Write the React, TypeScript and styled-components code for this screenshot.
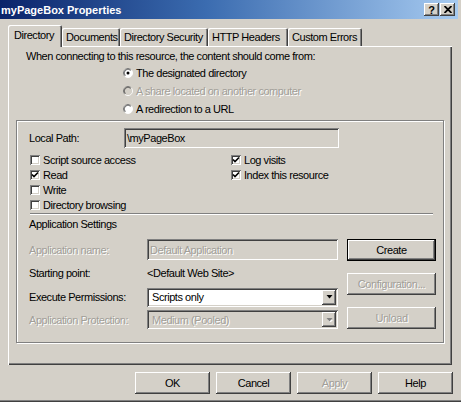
import React from 'react';
import styled, { createGlobalStyle, css } from 'styled-components';

const BG = '#d4d0c8';

const GlobalStyle = createGlobalStyle`
  html, body { margin: 0; padding: 0; background: ${BG}; }
  body {
    font-family: "Liberation Sans", Arial, sans-serif;
    font-size: 11px;
    letter-spacing: -0.45px;
    color: #000;
  }
  * { box-sizing: border-box; }
`;

const disabledText = css`
  color: #a19e98;
  text-shadow: 1px 1px 0 #fff;
`;

const raised = css`
  box-shadow: inset -1px -1px #404040, inset 1px 1px #fff, inset -2px -2px #808080;
`;

const sunken = css`
  box-shadow: inset 1px 1px #808080, inset -1px -1px #fff, inset 2px 2px #404040, inset -2px -2px ${BG};
`;

const Window = styled.div`
  width: 461px;
  height: 402px;
  background: ${BG};
  display: flex;
  flex-direction: column;
  box-shadow: inset 0 -1px #404040, inset 0 -2px #808080;
`;

const TitleBar = styled.div`
  height: 19px;
  margin-right: 3px;
  padding: 0 3px 0 1px;
  display: flex;
  align-items: center;
  justify-content: space-between;
  background: linear-gradient(90deg, #0a246a 0%, #3b6cb0 45%, #a6caf0 100%);
`;

const TitleText = styled.span`
  color: #fff;
  font-weight: bold;
  font-size: 11px;
  letter-spacing: 0;
`;

const CaptionButtons = styled.div`
  display: flex;
  gap: 1px;
`;

const CaptionButton = styled.div`
  width: 15px;
  height: 13px;
  background: ${BG};
  ${raised};
  display: flex;
  align-items: center;
  justify-content: center;
  font-weight: bold;
  font-size: 11px;
  letter-spacing: 0;
`;

const TabStrip = styled.div`
  display: flex;
  align-items: flex-end;
  height: 21px;
  margin-top: 6px;
  padding-left: 8px;
  position: relative;
  z-index: 1;
`;

const Tab = styled.div<{ $w: number; $active?: boolean }>`
  width: ${(p) => p.$w}px;
  height: ${(p) => (p.$active ? 22 : 18)}px;
  margin-bottom: ${(p) => (p.$active ? -1 : 0)}px;
  padding: ${(p) => (p.$active ? '0 0 3px 6px' : '0 0 0 4px')};
  display: flex;
  align-items: center;
  background: ${BG};
  border-radius: 2px 2px 0 0;
  box-shadow: inset 1px 1px #fff, inset -1px 0 #404040, inset -2px 0 #808080;
  white-space: nowrap;
`;

const Panel = styled.div`
  margin: 0 9px 0 8px;
  height: 319px;
  padding: 4px 0 0 1px;
  display: flex;
  flex-direction: column;
  box-shadow: inset 1px 1px #fff, inset -1px -1px #404040, inset -2px -2px #808080;
`;

const Intro = styled.div`
  margin-left: 17px;
  line-height: 13px;
  white-space: nowrap;
`;

const RadioGroup = styled.div`
  margin: 1px 0 0 114px;
  display: flex;
  flex-direction: column;
`;

const OptionRow = styled.label<{ $disabled?: boolean; $h?: number }>`
  height: ${(p) => p.$h ?? 18}px;
  display: flex;
  align-items: center;
  gap: 3px;
  white-space: nowrap;
  ${(p) => p.$disabled && disabledText};
`;

const GroupBox = styled.div`
  margin: 2px 0 0 7px;
  width: 428px;
  height: 223px;
  padding: 7px 0 0 12px;
  border: 1px solid #808080;
  box-shadow: inset 1px 1px #fff, 1px 1px #fff;
  display: flex;
  flex-direction: column;
`;

const LocalPathRow = styled.div`
  display: flex;
  align-items: center;
  height: 20px;
`;

const FieldLabel = styled.div<{ $w?: number; $disabled?: boolean }>`
  ${(p) => p.$w && `width: ${p.$w}px;`}
  white-space: nowrap;
  ${(p) => p.$disabled && disabledText};
`;

const TextField = styled.div<{ $w: number; $h?: number; $disabled?: boolean }>`
  width: ${(p) => p.$w}px;
  height: ${(p) => p.$h ?? 20}px;
  padding: 0 0 0 3px;
  display: flex;
  align-items: center;
  background: ${BG};
  ${sunken};
  white-space: nowrap;
  ${(p) => p.$disabled && disabledText};
`;

const CheckGrid = styled.div`
  margin: 4px 0 0 1px;
  display: grid;
  grid-template-columns: 201px auto;
  grid-auto-rows: 15px;
`;

const CheckBox = styled.span`
  width: 10px;
  height: 10px;
  flex: none;
  background: #fff;
  ${sunken};
  display: flex;
  align-items: center;
  justify-content: center;
`;

const Separator = styled.div`
  margin: 1px 10px 0 1px;
  height: 2px;
  border-top: 1px solid #808080;
  border-bottom: 1px solid #fff;
`;

const Heading = styled.div`
  margin-top: 3px;
  line-height: 13px;
`;

const SettingsArea = styled.div`
  margin-top: 8px;
  display: flex;
`;

const SettingsGrid = styled.div`
  display: grid;
  grid-template-columns: 118px 191px;
  grid-template-rows: 21px 26px 22px 23px;
  align-items: center;
`;

const SideButtons = styled.div`
  margin-left: 9px;
  display: flex;
  flex-direction: column;
  gap: 12px;
`;

const Button = styled.div<{ $w: number; $default?: boolean; $disabled?: boolean }>`
  width: ${(p) => p.$w}px;
  height: 22px;
  display: flex;
  align-items: center;
  justify-content: center;
  background: ${BG};
  white-space: nowrap;
  ${(p) =>
    p.$default
      ? css`
          box-shadow: inset 0 0 0 1px #000, inset -2px -2px #404040, inset 2px 2px #fff, inset -3px -3px #808080;
        `
      : raised};
  ${(p) => p.$disabled && disabledText};
`;

const Combo = styled.div<{ $disabled?: boolean }>`
  width: 191px;
  height: 19px;
  padding: 2px 2px 2px 5px;
  display: flex;
  align-items: center;
  background: ${(p) => (p.$disabled ? BG : '#fff')};
  ${sunken};
  ${(p) => p.$disabled && disabledText};
`;

const ComboText = styled.span`
  flex: 1;
  white-space: nowrap;
`;

const ComboArrow = styled.span`
  width: 14px;
  height: 15px;
  background: ${BG};
  ${raised};
  display: flex;
  align-items: center;
  justify-content: center;
`;

const Footer = styled.div`
  margin-top: 7px;
  padding-right: 8px;
  display: flex;
  justify-content: flex-end;
  gap: 6px;
`;

const Radio: React.FC<{ checked?: boolean; disabled?: boolean }> = ({ checked, disabled }) => (
  <svg width="10" height="10" viewBox="0 0 12 12" style={{ flex: 'none' }}>
    <circle cx="6" cy="6" r="5.5" fill={disabled ? BG : '#fff'} />
    <path d="M9.9 2.1 A5.5 5.5 0 0 0 2.1 9.9" fill="none" stroke="#808080" strokeWidth="1" />
    <path d="M9.2 2.8 A4.5 4.5 0 0 0 2.8 9.2" fill="none" stroke="#404040" strokeWidth="1" />
    <path d="M9.9 2.1 A5.5 5.5 0 0 1 2.1 9.9" fill="none" stroke="#fff" strokeWidth="1" />
    {checked && <circle cx="6" cy="6" r="1.8" fill="#000" />}
  </svg>
);

const Check: React.FC<{ checked?: boolean }> = ({ checked }) => (
  <CheckBox>
    {checked && (
      <svg width="8" height="8" viewBox="0 0 8 8">
        <path d="M1 3.5 L3 5.5 L7 1.5" fill="none" stroke="#000" strokeWidth="1.6" />
      </svg>
    )}
  </CheckBox>
);

const Arrow: React.FC<{ disabled?: boolean }> = ({ disabled }) => (
  <svg width="7" height="4" viewBox="0 0 7 4">
    {disabled && <path d="M1 1 H6 L3.5 3.5 Z" fill="#fff" transform="translate(1,1)" />}
    <path d="M0.5 0 H6.5 L3.5 3.5 Z" fill={disabled ? '#808080' : '#000'} />
  </svg>
);

const CheckItem: React.FC<{ label: string; checked?: boolean }> = ({ label, checked }) => (
  <OptionRow $h={15}>
    <Check checked={checked} />
    {label}
  </OptionRow>
);

const tabs = [
  { label: 'Directory', w: 54, active: true },
  { label: 'Documents', w: 58 },
  { label: 'Directory Security', w: 88 },
  { label: 'HTTP Headers', w: 80 },
  { label: 'Custom Errors', w: 74 },
];

export default function App() {
  return (
    <>
      <GlobalStyle />
      <Window>
        <TitleBar>
          <TitleText>myPageBox Properties</TitleText>
          <CaptionButtons>
            <CaptionButton>?</CaptionButton>
            <CaptionButton>
              <svg width="8" height="7" viewBox="0 0 8 7">
                <path d="M0.5 0 L7.5 7 M7.5 0 L0.5 7" stroke="#000" strokeWidth="1.8" />
              </svg>
            </CaptionButton>
          </CaptionButtons>
        </TitleBar>

        <TabStrip>
          {tabs.map((t) => (
            <Tab key={t.label} $w={t.w} $active={t.active}>
              {t.label}
            </Tab>
          ))}
        </TabStrip>

        <Panel>
          <Intro>When connecting to this resource, the content should come from:</Intro>
          <RadioGroup>
            <OptionRow>
              <Radio checked />
              The designated directory
            </OptionRow>
            <OptionRow $disabled>
              <Radio disabled />
              A share located on another computer
            </OptionRow>
            <OptionRow>
              <Radio />
              A redirection to a URL
            </OptionRow>
          </RadioGroup>

          <GroupBox>
            <LocalPathRow>
              <FieldLabel $w={95}>Local Path:</FieldLabel>
              <TextField $w={215}>\myPageBox</TextField>
            </LocalPathRow>

            <CheckGrid>
              <CheckItem label="Script source access" />
              <CheckItem label="Log visits" checked />
              <CheckItem label="Read" checked />
              <CheckItem label="Index this resource" checked />
              <CheckItem label="Write" />
              <span />
              <CheckItem label="Directory browsing" />
            </CheckGrid>

            <Separator />
            <Heading>Application Settings</Heading>

            <SettingsArea>
              <SettingsGrid>
                <FieldLabel $disabled>Application name:</FieldLabel>
                <TextField $w={191} $h={21} $disabled>
                  Default Application
                </TextField>

                <FieldLabel>Starting point:</FieldLabel>
                <FieldLabel>&lt;Default Web Site&gt;</FieldLabel>

                <FieldLabel>Execute Permissions:</FieldLabel>
                <Combo>
                  <ComboText>Scripts only</ComboText>
                  <ComboArrow>
                    <Arrow />
                  </ComboArrow>
                </Combo>

                <FieldLabel $disabled>Application Protection:</FieldLabel>
                <Combo $disabled>
                  <ComboText>Medium (Pooled)</ComboText>
                  <ComboArrow>
                    <Arrow disabled />
                  </ComboArrow>
                </Combo>
              </SettingsGrid>

              <SideButtons>
                <Button $w={89} $default>
                  Create
                </Button>
                <Button $w={89} $disabled>
                  Configuration...
                </Button>
                <Button $w={89} $disabled>
                  Unload
                </Button>
              </SideButtons>
            </SettingsArea>
          </GroupBox>
        </Panel>

        <Footer>
          <Button $w={75}>OK</Button>
          <Button $w={75}>Cancel</Button>
          <Button $w={75} $disabled>
            Apply
          </Button>
          <Button $w={75}>Help</Button>
        </Footer>
      </Window>
    </>
  );
}
